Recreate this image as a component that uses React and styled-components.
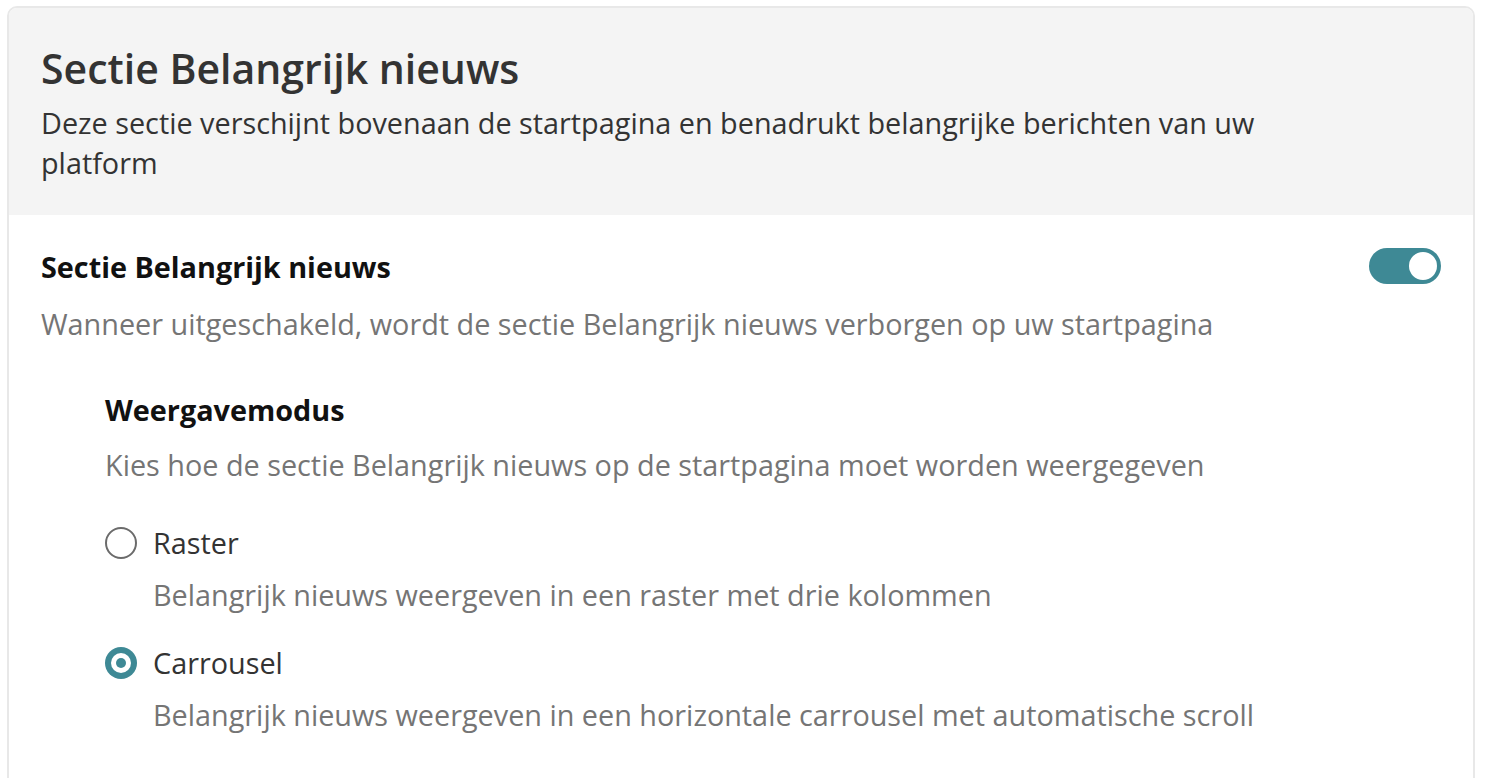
import React from "react";
import styled, { createGlobalStyle } from "styled-components";

const Global = createGlobalStyle`
  html, body { margin: 0; padding: 0; background: #ffffff; }
  body { font-family: "Open Sans", "Noto Sans", sans-serif; -webkit-font-smoothing: antialiased; }
  * { box-sizing: border-box; }
`;

const Page = styled.div`
  padding: 6px 17px 0 7px;
  height: 778px;
  overflow: hidden;
`;

const Card = styled.section`
  border: 2px solid #e8e8e8;
  border-radius: 10px;
  overflow: hidden;
  min-height: 900px;
  background: #ffffff;
`;

const Header = styled.header`
  background: #f4f4f4;
  padding: 35px 32px 32px;
`;

const Title = styled.h1`
  margin: 0 0 10px;
  font-size: 41px;
  line-height: 50px;
  font-weight: 600;
  color: #333333;
`;

const Lead = styled.p`
  margin: 0;
  max-width: 1250px;
  font-size: 28.8px;
  line-height: 40px;
  color: #333333;
`;

const Body = styled.div`
  padding: 32px 32px 0;
`;

const SettingRow = styled.div`
  display: flex;
  align-items: flex-start;
  justify-content: space-between;
`;

const SettingLabel = styled.h2`
  margin: 0;
  font-size: 28.8px;
  line-height: 40px;
  font-weight: 700;
  color: #111111;
`;

const Help = styled.p`
  margin: ${(p) => p.$mt || 0}px 0 0;
  font-size: 28.8px;
  line-height: 36px;
  color: #757575;
`;

const Switch = styled.button`
  width: 72px;
  height: 36px;
  border: none;
  border-radius: 18px;
  background: #3e8995;
  padding: 4px;
  display: flex;
  justify-content: flex-end;
  align-items: center;
  cursor: pointer;
  margin: 1px 0 0 0;
`;

const Knob = styled.span`
  width: 28px;
  height: 28px;
  border-radius: 50%;
  background: #ffffff;
`;

const SubSection = styled.div`
  padding: 48px 0 0 64px;
`;

const SubLabel = styled.h3`
  margin: 0;
  font-size: 28.8px;
  line-height: 40px;
  font-weight: 700;
  color: #111111;
`;

const Options = styled.div`
  display: flex;
  flex-direction: column;
  gap: 32px;
  margin-top: 42px;
`;

const Option = styled.label`
  display: grid;
  grid-template-columns: 32px 1fr;
  column-gap: 16px;
  row-gap: 16px;
  align-items: center;
  cursor: pointer;
`;

const Radio = styled.span`
  width: 32px;
  height: 32px;
  border-radius: 50%;
  display: flex;
  align-items: center;
  justify-content: center;
  border: ${(p) => (p.$checked ? "none" : "2px solid #6b6b6b")};
  background: ${(p) => (p.$checked ? "#3e8995" : "transparent")};
  &::after {
    content: "";
    display: ${(p) => (p.$checked ? "block" : "none")};
    width: 10px;
    height: 10px;
    border-radius: 50%;
    background: #3e8995;
    box-shadow: 0 0 0 5px #ffffff;
  }
`;

const OptionName = styled.span`
  font-size: 28.8px;
  line-height: 36px;
  color: #333333;
`;

const OptionHelp = styled.span`
  grid-column: 2;
  font-size: 28.8px;
  line-height: 36px;
  color: #757575;
`;

const options = [
  { name: "Raster", help: "Belangrijk nieuws weergeven in een raster met drie kolommen", checked: false },
  { name: "Carrousel", help: "Belangrijk nieuws weergeven in een horizontale carrousel met automatische scroll", checked: true },
];

export default function App() {
  return (
    <>
      <Global />
      <Page>
        <Card>
          <Header>
            <Title>Sectie Belangrijk nieuws</Title>
            <Lead>
              Deze sectie verschijnt bovenaan de startpagina en benadrukt belangrijke berichten van uw platform
            </Lead>
          </Header>
          <Body>
            <SettingRow>
              <SettingLabel>Sectie Belangrijk nieuws</SettingLabel>
              <Switch aria-pressed="true"><Knob /></Switch>
            </SettingRow>
            <Help $mt={19}>Wanneer uitgeschakeld, wordt de sectie Belangrijk nieuws verborgen op uw startpagina</Help>
            <SubSection>
              <SubLabel>Weergavemodus</SubLabel>
              <Help $mt={17}>Kies hoe de sectie Belangrijk nieuws op de startpagina moet worden weergegeven</Help>
              <Options>
                {options.map((o) => (
                  <Option key={o.name}>
                    <Radio $checked={o.checked} />
                    <OptionName>{o.name}</OptionName>
                    <OptionHelp>{o.help}</OptionHelp>
                  </Option>
                ))}
              </Options>
            </SubSection>
          </Body>
        </Card>
      </Page>
    </>
  );
}
